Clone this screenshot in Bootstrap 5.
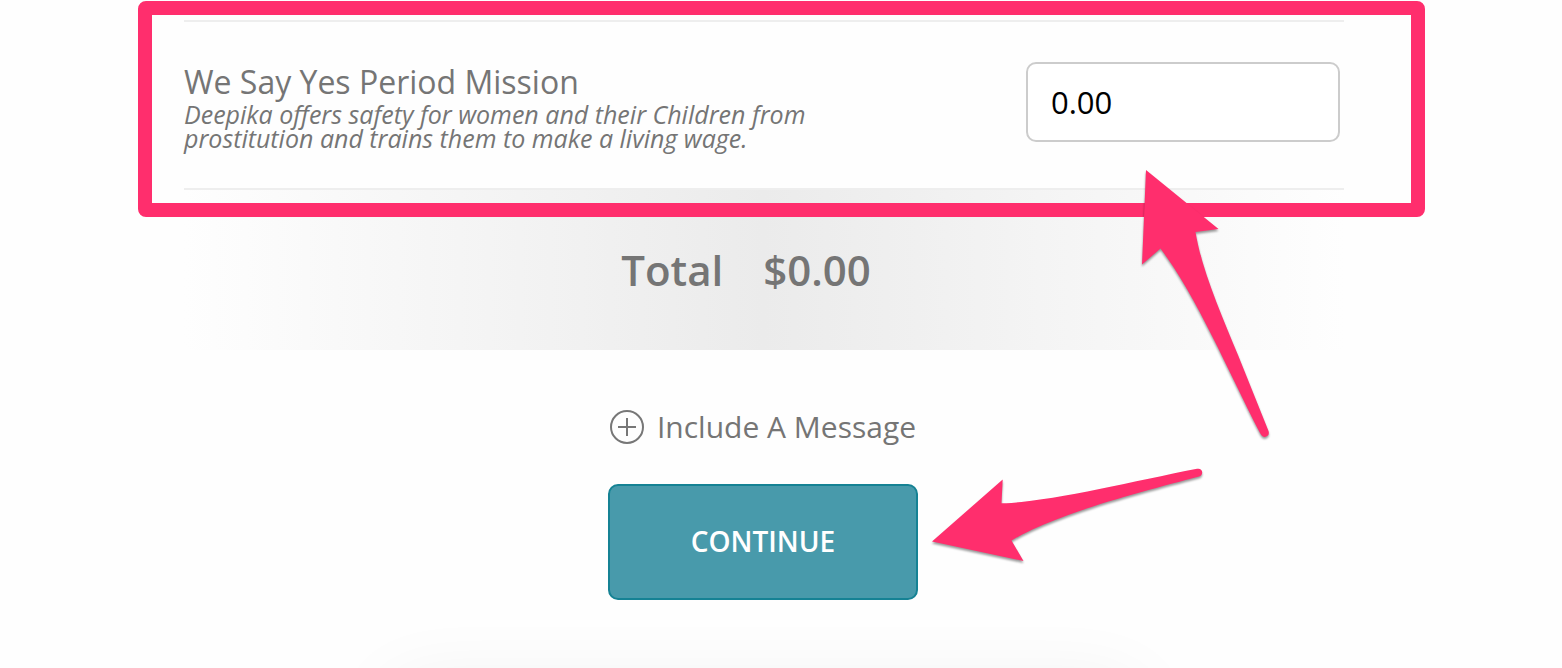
<!DOCTYPE html>
<html lang="en">
<head>
<meta charset="utf-8">
<meta name="viewport" content="width=device-width, initial-scale=1">
<title>Give</title>
<link href="https://cdn.jsdelivr.net/npm/bootstrap@5.3.0/dist/css/bootstrap.min.css" rel="stylesheet">
<style>
  body { font-family: "Open Sans", sans-serif; color: #757575; background: #fefefe; }
  .give-page { max-width: 1194px; padding: 20px 34px 0 0; min-height: 100vh; }
  .fund-row { border-top: 2px solid #eee; border-bottom: 2px solid #eee; padding: 40px 4px 38px 0; }
  .fund-name { font-size: 32px; line-height: 40px; }
  .fund-note { font-size: 25px; line-height: 24px; max-width: 660px; }
  .fund-amount { width: 314px; height: 80px; border: 2px solid #ccc; border-radius: 10px; font-size: 31px; padding: 8px 23px; color: #000; background: #fff; }
  .total-bar { background: linear-gradient(90deg, #fefefe, #ebebeb 50%, #fefefe); height: 160px; font-size: 42px; font-weight: 600; line-height: 60px; gap: 40px; padding: 50px 36px 0 0; }
  .give-actions { padding-right: 2px; }
  .message-link { color: #757575; font-size: 30px; line-height: 40px; gap: 12px; margin-top: 57px; }
  .btn-continue { width: 310px; height: 116px; margin-top: 37px; padding-bottom: 8px; border: 2px solid #158294; border-radius: 10px; background: #489aab; color: #fff; font-size: 28px; font-weight: 600; }
  .btn-continue:hover { background: #3b8999; color: #fff; }
  .foot-shade { margin-top: 8px; height: 60px; overflow: hidden; }
  .foot-panel { width: 740px; height: 100px; margin-top: 80px; box-shadow: 0 0 80px rgba(0, 0, 0, .07); }
  .callout-frame { inset: -21px -81px -29px -46px; border: 14px solid #ff2e6d; border-radius: 8px; pointer-events: none; }
  .callout-arrow { pointer-events: none; overflow: visible; filter: drop-shadow(0 2px 1px rgba(0, 0, 0, .4)); }
  .arrow-amount { top: 148px; right: 74px; }
  .arrow-continue { left: 324px; top: 21px; }
</style>
</head>
<body class="overflow-hidden">
<main class="give-page mx-auto">
  <section class="fund-row position-relative d-flex justify-content-between align-items-start">
    <div>
      <label class="fund-name d-block" for="amount">We Say Yes Period Mission</label>
      <p class="fund-note fst-italic mb-0">Deepika offers safety for women and their Children from prostitution and trains them to make a living wage.</p>
    </div>
    <input class="fund-amount" id="amount" type="text" value="0.00">
    <div class="callout-frame position-absolute"></div>
    <svg class="callout-arrow arrow-amount position-absolute z-1" width="130" height="270" viewBox="1140 170 130 270" aria-hidden="true">
      <path fill="#ff2e6d" d="M1146 170 L1218.500 229 L1195.500 232 C1202 271 1222 316 1238 355 L1268.500 431 Q1270 436 1265 437 Q1262 437 1260 433 C1228 371 1197 297 1160.500 248.500 L1142 264.500 Z"/>
    </svg>
  </section>
  <section class="total-bar d-flex justify-content-center">
    <span>Total</span><span>$0.00</span>
  </section>
  <section class="give-actions d-flex flex-column align-items-center">
    <a class="message-link d-flex align-items-center text-decoration-none" href="#message">
      <svg width="35" height="35" viewBox="0 0 35 35" fill="none" stroke="#777" aria-hidden="true">
        <circle cx="17" cy="17" r="16" stroke-width="2"/>
        <path d="M17 8v18M8 17h18" stroke-width="2"/>
      </svg>
      <span>Include A Message</span>
    </a>
    <div class="position-relative">
      <button class="btn btn-continue" type="button">CONTINUE</button>
      <svg class="callout-arrow arrow-continue position-absolute" width="271" height="94" viewBox="932 468 271 94" aria-hidden="true">
        <path fill="#ff2e6d" d="M932 541.500 L1002.700 479.500 L1001.500 503.300 C1050 502 1130 482 1197 468.800 C1203 467.500 1204 475 1199 476.500 C1145 491 1060 512 1011.500 540.500 L1023.500 561 Z"/>
      </svg>
    </div>
  </section>
  <div class="foot-shade"><div class="foot-panel mx-auto"></div></div>
</main>
<script src="https://cdn.jsdelivr.net/npm/bootstrap@5.3.0/dist/js/bootstrap.bundle.min.js"></script>
</body>
</html>
